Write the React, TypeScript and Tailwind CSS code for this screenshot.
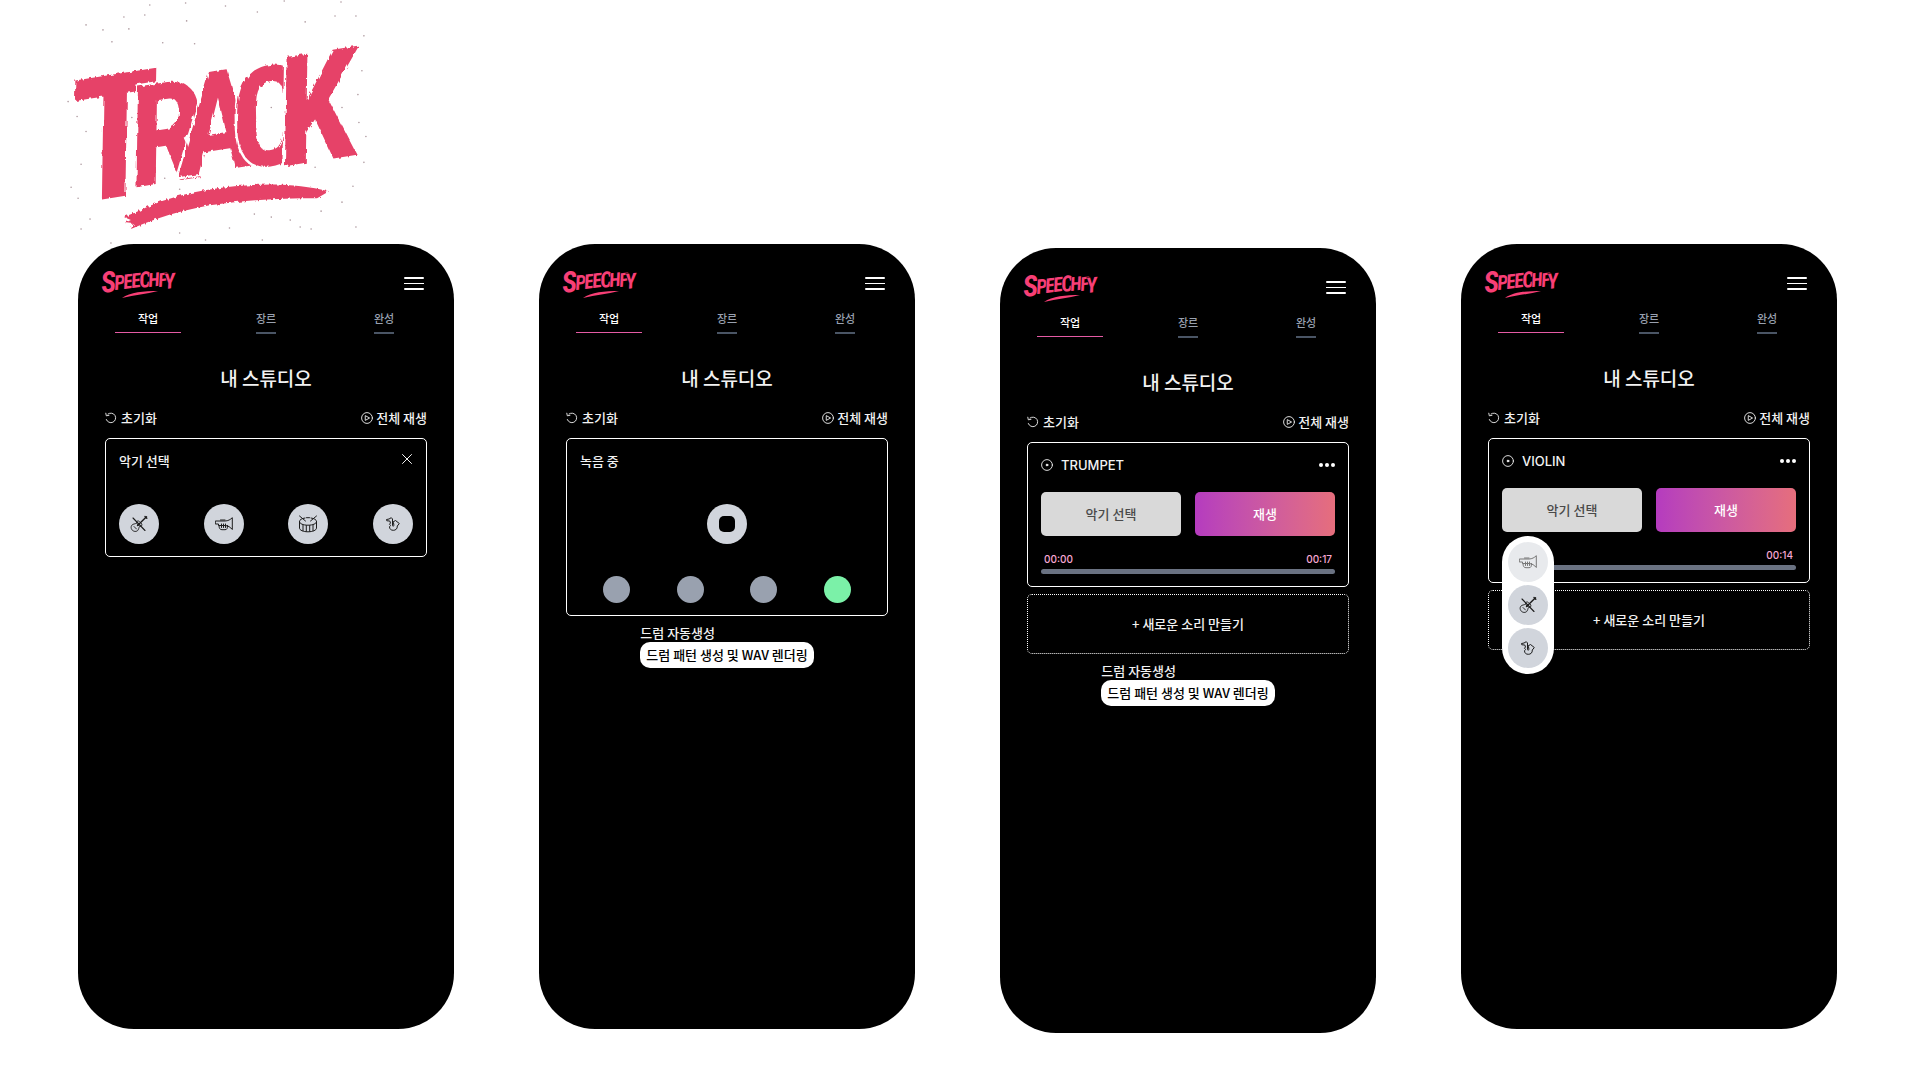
import { useId } from "react";

type Letter = { ch: string; x: number; y: number; size: number };

const TRACK_LETTERS: Letter[] = [
  { ch: "T", x: 18, y: 204, size: 172 },
  { ch: "R", x: 76, y: 188, size: 140 },
  { ch: "A", x: 124, y: 177, size: 140 },
  { ch: "C", x: 178, y: 171, size: 138 },
  { ch: "K", x: 225, y: 167, size: 152 },
];

const SPECKS: [number, number, number][] = [
  [90, 5, 1], [126, 3, 1], [166, 6, 1], [225, 1, 1], [282, 2, 1], [64, 17, 1], [85, 15, 1], [127, 21, 1],
  [198, 12, 1], [246, 22, 1], [276, 16, 1], [297, 16, 1], [26, 25, 1], [43, 30, 1], [69, 29, 1], [135, 44, 1],
  [103, 43, 1], [52, 42, 1], [305, 36, 1], [303, 71, 1], [299, 95, 1], [8, 102, 1], [17, 117, 1], [28, 94, 1],
  [19, 91, 1], [26, 132, 1], [283, 108, 1], [300, 123, 1], [307, 137, 1], [21, 165, 1], [11, 188, 1], [18, 199, 1],
  [30, 220, 1], [21, 230, 1], [305, 163, 1], [294, 187, 1], [283, 203, 1], [262, 212, 1], [297, 228, 1], [241, 228, 1],
  [231, 221, 1], [195, 215, 1], [170, 229, 1], [146, 241, 1], [120, 190, 1], [72, 118, 1], [105, 179, 1], [252, 230, 1],
  [203, 241, 1], [51, 244, 1], [212, 108, 1], [256, 168, 1], [120, 234, 1], [212, 218, 1],
];

const BRAND_FONT = "'Roboto Condensed','Liberation Sans Narrow','DejaVu Sans Condensed',sans-serif";

function TrackLogo() {
  const id = useId();
  return (
    <svg viewBox="0 0 320 245" className="block h-[244px] w-[319px] overflow-visible" role="img" aria-label="TRACK">
      <filter id={id} x="-5%" y="-5%" width="110%" height="110%">
        <feTurbulence type="fractalNoise" baseFrequency="0.35 0.1" numOctaves="2" seed="4" />
        <feDisplacementMap in="SourceGraphic" scale="4" />
      </filter>
      <g fill="#6b4650" opacity="0.55">
        {SPECKS.map(([x, y, r]) => (
          <circle key={`${x}-${y}`} cx={x} cy={y} r={r * 0.8} />
        ))}
      </g>
      <g filter={`url(#${id})`} fill="#e64268" fontFamily={BRAND_FONT} fontWeight={700} fontStyle="italic">
        {TRACK_LETTERS.map((l) => (
          <text
            key={l.ch}
            x={l.x}
            y={l.y}
            fontSize={l.size}
            stroke="#ffffff"
            strokeWidth="5"
            paintOrder="stroke"
            transform={`rotate(-9 ${l.x} ${l.y})`}
          >
            {l.ch}
          </text>
        ))}
        <path d="M64 218 L76 213 C110 196 150 188 190 186 C220 184 245 186 270 192 L258 199 C230 199 200 200 175 203 C140 206 105 215 71 230 L74 225 L65 224 L71 221 Z" />
      </g>
    </svg>
  );
}

const BRAND_LETTERS: Letter[] = [
  { ch: "S", x: 4, y: 33, size: 29 },
  { ch: "P", x: 17, y: 30, size: 20 },
  { ch: "E", x: 26, y: 29, size: 20 },
  { ch: "E", x: 34, y: 28, size: 20 },
  { ch: "C", x: 42, y: 28, size: 22 },
  { ch: "H", x: 51, y: 27, size: 19 },
  { ch: "F", x: 61, y: 27, size: 19 },
  { ch: "Y", x: 67, y: 29, size: 21 },
];

function BrandLogo() {
  return (
    <svg viewBox="0 0 80 40" className="h-10 w-20 overflow-visible" role="img" aria-label="SPEECHFY">
      <g fill="#f83f76" fontFamily={BRAND_FONT} fontWeight={700} fontStyle="italic">
        {BRAND_LETTERS.map((l, i) => (
          <text
            key={i}
            x={l.x}
            y={l.y}
            fontSize={l.size}
            stroke="#000000"
            strokeWidth="1"
            paintOrder="stroke"
            transform={`rotate(-7 ${l.x} ${l.y})`}
          >
            {l.ch}
          </text>
        ))}
        <path d="M24 38 C32 32 46 31 60 31 C48 34 37 35 24 38 Z" />
      </g>
    </svg>
  );
}

const line = { fill: "none", stroke: "currentColor", strokeLinecap: "round", strokeLinejoin: "round" } as const;

function ViolinIcon() {
  return (
    <svg viewBox="0 0 18 18" className="size-[18px]" {...line} strokeWidth="0.9">
      <path d="M3 3 L15 15.500" strokeWidth="1.100" />
      <path d="M16.500 1.800 L7.500 10.500 M15 1.500 L16.800 3.300" strokeWidth="1.400" />
      <path d="M9.500 6.500 C8.500 5.300 6.600 5.900 6.500 7.600 C6.300 8.500 5.400 8.700 4 9 C0.700 9.700 0.400 13.200 2.300 15.200 C4.400 17.200 8 16.800 8.700 13.700 C9 12.300 9.300 11.600 10.200 11.400 C12 11.200 12.600 9.400 11.400 8.300" />
      <path d="M4 11.500 L6.500 14 M6.700 8.500 L9.300 11.200" />
    </svg>
  );
}

function TrumpetIcon() {
  return (
    <svg viewBox="0 0 18 14" className="h-3.5 w-[18px]" {...line} strokeWidth="1">
      <path d="M0.700 4 H10 C13 4 15.500 2.500 17.300 0.700 V12.500 C15.500 10.300 13 8.500 10 8.500 H3.500 V7 H0.700 Z" />
      <path d="M4 8.500 C4 11.500 5 12.700 7 12.700 H10 C12 12.700 12.500 11.500 12.500 8.500 M6.500 7 V10.500 M8.500 7 V10.500 M10.500 7 V10.500" />
      <path d="M5.500 3 H10" />
    </svg>
  );
}

function DrumIcon() {
  return (
    <svg viewBox="0 0 20 18" className="h-[18px] w-5" {...line} strokeWidth="1">
      <path d="M7 3 C3.800 3.400 1.500 4.800 1.500 6.500 C1.500 8.700 5.300 10.200 10 10.200 C14.700 10.200 18.500 8.700 18.500 6.500 C18.500 4.800 16.200 3.400 13 3 M8.500 2.700 H11.500" />
      <path d="M1.500 6.500 V13 C1.500 15.300 5.500 16.800 10 16.800 C14.500 16.800 18.500 15.300 18.500 13 V6.500" />
      <path d="M5 9.700 V15.800 M8.300 10.500 V16.500 M11.700 10.500 V16.500 M15 9.700 V15.800 M1.500 1 L7.500 6 M18.500 1 L12.500 6" />
    </svg>
  );
}

function SaxIcon() {
  return (
    <svg viewBox="0 0 14 14" className="size-3.5" {...line} strokeWidth="1">
      <path d="M0.700 2.500 L3 2 L5.300 0.700 L6.500 2 V8.500 C6.500 9.500 7.800 9.500 7.800 8.500 V7 L7 5 L9.500 3.500 L13.300 6.500 L11.300 9 C11.500 12 9.500 13.300 7.300 13.300 C5 13.300 3.500 12 3.500 9.800 L4.500 8.500 L3.500 7.200 L4.500 6 L3.800 4 L1.200 3.800 Z" />
    </svg>
  );
}

function ResetIcon() {
  return (
    <svg viewBox="0 0 12 12" className="size-3" {...line} strokeWidth="0.9">
      <path d="M3 2 A4.800 4.800 0 1 1 1.300 7.500 M0.800 1.200 L1.300 3.800 L4 3.300" />
    </svg>
  );
}

function PlayCircleIcon() {
  return (
    <svg viewBox="0 0 12 12" className="size-3" {...line} strokeWidth="0.9">
      <circle cx="6" cy="6" r="5.400" />
      <path d="M4.600 3.800 L8.600 6 L4.600 8.200 Z" />
    </svg>
  );
}

function DiscIcon() {
  return (
    <svg viewBox="0 0 12 12" className="size-3" {...line} strokeWidth="0.9">
      <circle cx="6" cy="6" r="5.400" />
      <circle cx="6" cy="6" r="0.900" fill="currentColor" />
    </svg>
  );
}

function Phone({ lowered = false, children }: { lowered?: boolean; children: React.ReactNode }) {
  return (
    <section className={`aspect-[376/785] rounded-[56px] bg-black text-[#f2f2f2] ${lowered ? "mt-1" : ""}`}>
      <header className="flex items-center justify-between pt-4 pr-[30px] pl-5">
        <BrandLogo />
        <button type="button" aria-label="메뉴" className="flex w-5 flex-col gap-1 pt-1.5">
          <span className="h-[2px] w-full rounded bg-white" />
          <span className="h-px w-full bg-white" />
          <span className="h-[2px] w-full rounded bg-white" />
        </button>
      </header>
      <nav className="grid grid-cols-3 px-[11px] pt-2.5 text-[11px] leading-4 font-medium">
        <a href="#work" className="flex flex-col items-center gap-1.5 text-white">
          작업
          <span className="h-px w-[66px] bg-[#e55ba5]" />
        </a>
        {["장르", "완성"].map((t) => (
          <a key={t} href={`#${t}`} className="flex flex-col items-center gap-1.5 text-gray-400">
            {t}
            <span className="h-[2px] w-5 bg-gray-600" />
          </a>
        ))}
      </nav>
      <h2 className="pt-[30px] text-center text-[19px] leading-7 font-medium">내 스튜디오</h2>
      <div className="px-[27px] text-[13px] leading-4 font-medium">
        <div className="flex justify-between pt-[18px] pb-3">
          <button type="button" className="flex items-center gap-1">
            <ResetIcon />
            초기화
          </button>
          <button type="button" className="flex items-center gap-[3px]">
            <PlayCircleIcon />
            전체 재생
          </button>
        </div>
        {children}
      </div>
    </section>
  );
}

function Round({ label, faded = false, children }: { label: string; faded?: boolean; children: React.ReactNode }) {
  return (
    <button
      type="button"
      aria-label={label}
      className={`flex size-10 items-center justify-center rounded-full ${faded ? "bg-[#e8eaed] text-[#777777]" : "bg-gray-300 text-[#1c1c1c]"}`}
    >
      {children}
    </button>
  );
}

function DrumGenerator() {
  return (
    <div className="mx-auto flex w-max flex-col pt-[7px]">
      <span className="leading-[19px]">드럼 자동생성</span>
      <button type="button" className="h-[26px] rounded-[10px] bg-white px-1.5 text-black">
        드럼 패턴 생성 및 WAV 렌더링
      </button>
    </div>
  );
}

function TrackCard({ name, length, picker = false }: { name: string; length: string; picker?: boolean }) {
  return (
    <>
      <article className="rounded-[5px] border border-white px-[13px] pt-3.5 pb-3">
        <div className="flex items-center justify-between">
          <h3 className="flex items-center gap-2 font-['Inter','Noto_Sans_CJK_KR',sans-serif]">
            <DiscIcon />
            {name}
          </h3>
          <button type="button" aria-label="더보기" className="flex gap-0.5">
            <span className="size-1 rounded-full bg-white" />
            <span className="size-1 rounded-full bg-white" />
            <span className="size-1 rounded-full bg-white" />
          </button>
        </div>
        <div className="relative grid grid-cols-2 gap-3.5 pt-[19px]">
          <button type="button" className="h-11 rounded-[5px] bg-[#d9d9d9] text-[#4a4a4a]">
            악기 선택
          </button>
          <button type="button" className="h-11 rounded-[5px] bg-linear-to-r from-[#b53bbf] to-[#e66e7c] text-white">
            재생
          </button>
          {picker && (
            <div className="absolute top-full left-0 z-10 mt-1 flex flex-col gap-[3px] rounded-full bg-white p-1.5">
              <Round label="트럼펫" faded>
                <TrumpetIcon />
              </Round>
              <Round label="바이올린">
                <ViolinIcon />
              </Round>
              <Round label="색소폰">
                <SaxIcon />
              </Round>
            </div>
          )}
        </div>
        <div className="flex justify-between px-[3px] pt-4 pb-[3px] font-['Inter',sans-serif] text-[10px] leading-[14px] text-[#f9a8d4]">
          <span>00:00</span>
          <span>{length}</span>
        </div>
        <div className="h-[5px] rounded-full bg-gray-500" />
      </article>
      <button
        type="button"
        className="mt-[7px] h-[60px] w-full rounded-[5px] border border-dotted border-white"
      >
        + 새로운 소리 만들기
      </button>
    </>
  );
}

export default function App() {
  return (
    <main className="min-h-screen bg-white font-['Noto_Sans_CJK_KR',sans-serif]">
      <div className="pl-[60px]">
        <TrackLogo />
      </div>
      <div className="grid grid-cols-4 items-start gap-x-[85px] pr-[83px] pl-[78px]">
        <Phone>
          <article className="rounded-[5px] border border-white px-[13px] pt-3.5 pb-3">
            <div className="flex items-start justify-between">
              <h3>악기 선택</h3>
              <button type="button" aria-label="닫기">
                <svg viewBox="0 0 12 12" className="size-3" {...line}>
                  <path d="M1.500 1.500 L10.500 10.500 M10.500 1.500 L1.500 10.500" />
                </svg>
              </button>
            </div>
            <div className="flex justify-between pt-[35px]">
              <Round label="바이올린">
                <ViolinIcon />
              </Round>
              <Round label="트럼펫">
                <TrumpetIcon />
              </Round>
              <Round label="드럼">
                <DrumIcon />
              </Round>
              <Round label="색소폰">
                <SaxIcon />
              </Round>
            </div>
          </article>
        </Phone>
        <Phone>
          <article className="rounded-[5px] border border-white px-[13px] pt-3.5 pb-3">
            <h3>녹음 중</h3>
            <div className="flex justify-center pt-[35px]">
              <Round label="정지">
                <span className="size-4 rounded-[5px] bg-black" />
              </Round>
            </div>
            <div className="grid grid-cols-4 justify-items-center pt-8">
              <span className="size-[27px] rounded-full bg-gray-400" />
              <span className="size-[27px] rounded-full bg-gray-400" />
              <span className="size-[27px] rounded-full bg-gray-400" />
              <span className="size-[27px] rounded-full bg-[#7bf1a8]" />
            </div>
          </article>
          <DrumGenerator />
        </Phone>
        <Phone lowered>
          <TrackCard name="TRUMPET" length="00:17" />
          <DrumGenerator />
        </Phone>
        <Phone>
          <TrackCard name="VIOLIN" length="00:14" picker />
        </Phone>
      </div>
    </main>
  );
}
